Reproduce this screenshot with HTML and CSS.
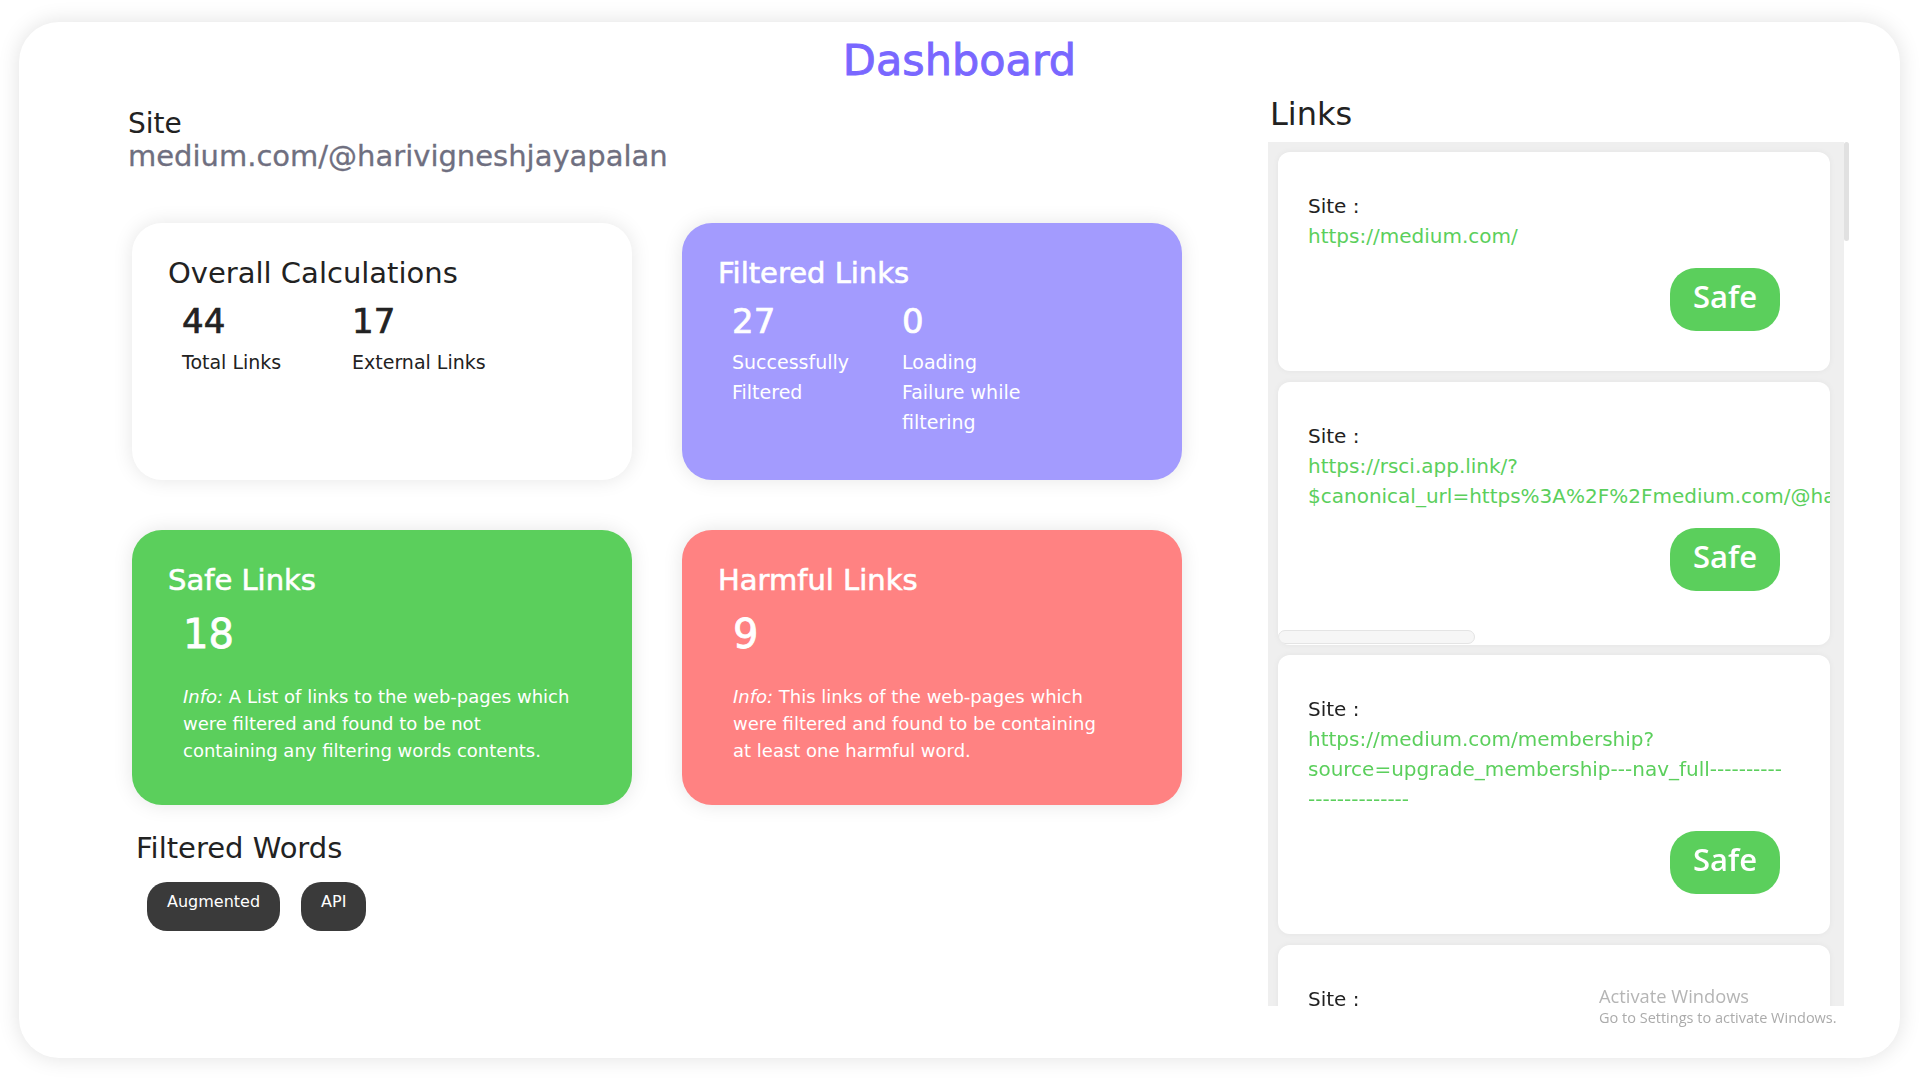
FILE: index.html
```html
<!DOCTYPE html>
<html lang="en">
<head>
<meta charset="utf-8">
<title>Dashboard</title>
<link rel="stylesheet" href="styles.css">
</head>
<body>
<div class="panel">
  <h1 class="title">Dashboard</h1>
  <div class="main">
    <section class="left">
      <div class="site">
        <div class="site-label">Site</div>
        <div class="site-url">medium.com/@harivigneshjayapalan</div>
      </div>

      <div class="cards">
        <div class="card card-white">
          <h2 class="card-title">Overall Calculations</h2>
          <div class="stats">
            <div class="stat">
              <div class="stat-num">44</div>
              <div class="stat-label">Total Links</div>
            </div>
            <div class="stat">
              <div class="stat-num">17</div>
              <div class="stat-label">External Links</div>
            </div>
          </div>
        </div>

        <div class="card card-purple">
          <h2 class="card-title">Filtered Links</h2>
          <div class="stats">
            <div class="stat">
              <div class="stat-num">27</div>
              <div class="stat-label">Successfully Filtered</div>
            </div>
            <div class="stat">
              <div class="stat-num">0</div>
              <div class="stat-label">Loading Failure while filtering</div>
            </div>
          </div>
        </div>

        <div class="card card-green">
          <h2 class="card-title">Safe Links</h2>
          <div class="big-num">18</div>
          <p class="info"><em>Info:</em> A List of links to the web-pages which<br>were filtered and found to be not<br>containing any filtering words contents.</p>
        </div>

        <div class="card card-red">
          <h2 class="card-title">Harmful Links</h2>
          <div class="big-num">9</div>
          <p class="info"><em>Info:</em> This links of the web-pages which<br>were filtered and found to be containing<br>at least one harmful word.</p>
        </div>
      </div>

      <h2 class="words-title">Filtered Words</h2>
      <div class="pills">
        <span class="pill">Augmented</span>
        <span class="pill">API</span>
      </div>
    </section>

    <section class="right">
      <h2 class="links-title">Links</h2>
      <div class="list-wrap">
        <div class="link-list">
          <div class="link-card">
            <div class="link-site">Site :</div>
            <div class="link-url"><span class="line">https://medium.com/</span></div>
            <span class="verdict safe">Safe</span>
          </div>
          <div class="link-card scroll">
            <div class="link-site">Site :</div>
            <div class="link-url"><span class="line">https://rsci.app.link/?</span><span class="line">$canonical_url=https%3A%2F%2Fmedium.com/@harivigneshjayapalan&amp;~feature=LoOpenInAppButton&amp;~channel=ShowUser&amp;~stage=mobileNav</span></div>
            <span class="verdict safe">Safe</span>
            <div class="hthumb"></div>
          </div>
          <div class="link-card">
            <div class="link-site">Site :</div>
            <div class="link-url"><span class="line">https://medium.com/membership?</span><span class="line">source=upgrade_membership---nav_full----------</span><span class="line">--------------</span></div>
            <span class="verdict safe">Safe</span>
          </div>
          <div class="link-card">
            <div class="link-site">Site :</div>
            <div class="link-url wrap">https://medium.com/?source=---two_column_layout_nav----------------------------------</div>
            <span class="verdict safe">Safe</span>
          </div>
          <div class="link-card">
            <div class="link-site">Site :</div>
            <div class="link-url wrap">https://medium.com/m/signin?operation=register&amp;redirect=https%3A%2F%2Fmedium.com%2F%40harivigneshjayapalan</div>
            <span class="verdict safe">Safe</span>
          </div>
          <div class="link-card">
            <div class="link-site">Site :</div>
            <div class="link-url wrap">https://medium.com/@harivigneshjayapalan/augmented-reality-in-the-browser-with-webxr-3c5d2a9e1f41</div>
            <span class="verdict harmful">Harmful</span>
          </div>
          <div class="link-card">
            <div class="link-site">Site :</div>
            <div class="link-url wrap">https://medium.com/m/signin?operation=login&amp;redirect=https%3A%2F%2Fmedium.com%2F%40harivigneshjayapalan</div>
            <span class="verdict safe">Safe</span>
          </div>
          <div class="link-card">
            <div class="link-site">Site :</div>
            <div class="link-url wrap">https://medium.com/@harivigneshjayapalan/building-a-rest-api-with-node-js-and-express-7b1e4d3c2a10</div>
            <span class="verdict harmful">Harmful</span>
          </div>
          <div class="link-card">
            <div class="link-site">Site :</div>
            <div class="link-url wrap">https://medium.com/search?source=---two_column_layout_nav----------------------------------</div>
            <span class="verdict safe">Safe</span>
          </div>
          <div class="link-card">
            <div class="link-site">Site :</div>
            <div class="link-url wrap">https://medium.com/@harivigneshjayapalan/augmented-reality-markers-and-image-tracking-9f2a61c0d8e3</div>
            <span class="verdict harmful">Harmful</span>
          </div>
          <div class="link-card">
            <div class="link-site">Site :</div>
            <div class="link-url wrap">https://medium.com/new-story?source=---two_column_layout_nav-----------------------</div>
            <span class="verdict safe">Safe</span>
          </div>
          <div class="link-card">
            <div class="link-site">Site :</div>
            <div class="link-url wrap">https://medium.com/@harivigneshjayapalan/followers?source=user_profile-------------------------------------</div>
            <span class="verdict safe">Safe</span>
          </div>
          <div class="link-card">
            <div class="link-site">Site :</div>
            <div class="link-url wrap">https://medium.com/@harivigneshjayapalan/consuming-a-public-api-in-react-hooks-2d8e5f7a4b96</div>
            <span class="verdict harmful">Harmful</span>
          </div>
          <div class="link-card">
            <div class="link-site">Site :</div>
            <div class="link-url wrap">https://medium.com/@harivigneshjayapalan/about?source=user_profile-------------------------------------</div>
            <span class="verdict safe">Safe</span>
          </div>
          <div class="link-card">
            <div class="link-site">Site :</div>
            <div class="link-url wrap">https://help.medium.com/hc/en-us?source=user_profile-------------------------------------</div>
            <span class="verdict safe">Safe</span>
          </div>
          <div class="link-card">
            <div class="link-site">Site :</div>
            <div class="link-url wrap">https://medium.com/@harivigneshjayapalan/augmented-reality-with-unity-and-vuforia-61c4a8b2e7d5</div>
            <span class="verdict harmful">Harmful</span>
          </div>
          <div class="link-card">
            <div class="link-site">Site :</div>
            <div class="link-url wrap">https://medium.statuspage.io/?source=user_profile-------------------------------------</div>
            <span class="verdict safe">Safe</span>
          </div>
          <div class="link-card">
            <div class="link-site">Site :</div>
            <div class="link-url wrap">https://about.medium.com/creators/?source=user_profile-------------------------------------</div>
            <span class="verdict safe">Safe</span>
          </div>
          <div class="link-card">
            <div class="link-site">Site :</div>
            <div class="link-url wrap">https://medium.com/@harivigneshjayapalan/securing-your-api-with-jwt-tokens-0a3f9e6c1b28</div>
            <span class="verdict harmful">Harmful</span>
          </div>
          <div class="link-card">
            <div class="link-site">Site :</div>
            <div class="link-url wrap">https://blog.medium.com/?source=user_profile-------------------------------------</div>
            <span class="verdict safe">Safe</span>
          </div>
          <div class="link-card">
            <div class="link-site">Site :</div>
            <div class="link-url wrap">https://medium.com/jobs-at-medium/work-at-medium-959d1a85284e?source=user_profile--------------</div>
            <span class="verdict safe">Safe</span>
          </div>
          <div class="link-card">
            <div class="link-site">Site :</div>
            <div class="link-url wrap">https://medium.com/@harivigneshjayapalan/augmented-and-virtual-reality-what-is-the-difference-4e7b9d2c6a01</div>
            <span class="verdict harmful">Harmful</span>
          </div>
          <div class="link-card">
            <div class="link-site">Site :</div>
            <div class="link-url wrap">https://policy.medium.com/medium-privacy-policy-f03bf92035c9?source=user_profile-------------</div>
            <span class="verdict safe">Safe</span>
          </div>
          <div class="link-card">
            <div class="link-site">Site :</div>
            <div class="link-url wrap">https://policy.medium.com/medium-terms-of-service-9db0094a1e0f?source=user_profile-------------</div>
            <span class="verdict safe">Safe</span>
          </div>
          <div class="link-card">
            <div class="link-site">Site :</div>
            <div class="link-url wrap">https://medium.com/@harivigneshjayapalan/graphql-vs-rest-api-design-choices-5c2d8a1f9e73</div>
            <span class="verdict harmful">Harmful</span>
          </div>
          <div class="link-card">
            <div class="link-site">Site :</div>
            <div class="link-url wrap">https://speechify.com/medium?source=user_profile-------------------------------------</div>
            <span class="verdict safe">Safe</span>
          </div>
          <div class="link-card">
            <div class="link-site">Site :</div>
            <div class="link-url wrap">https://medium.com/@harivigneshjayapalan/testing-api-endpoints-with-postman-8b6e1c4d7f20</div>
            <span class="verdict harmful">Harmful</span>
          </div>
        </div>
        <div class="vscroll"><div class="vthumb"></div></div>
      </div>
    </section>
  </div>
</div>

<div class="watermark">
  <div class="wm-1">Activate Windows</div>
  <div class="wm-2">Go to Settings to activate Windows.</div>
</div>
</body>
</html>
```
FILE: styles.css
```css
html, body {
  margin: 0;
  padding: 0;
  background: #ffffff;
}

body {
  font-family: "DejaVu Sans", "Liberation Sans", sans-serif;
  color: #222222;
  overflow: hidden;
}

.panel {
  margin: 22px 20px 22px 19px;
  height: 1036px;
  box-sizing: border-box;
  padding-top: 12px;
  background: #ffffff;
  border-radius: 40px;
  box-shadow: 0 0 22px rgba(0, 0, 0, 0.12);
  overflow: hidden;
}

.title {
  margin: 0;
  text-align: center;
  font-size: 43px;
  line-height: 52px;
  font-weight: normal;
  color: #7967ff;
  -webkit-text-stroke: 0.9px #7967ff;
}

.main {
  display: grid;
  grid-template-columns: 1140px 582px;
  padding-left: 109px;
}

/* ---------- left column ---------- */

.site {
  margin-top: 21px;
}

.site-label {
  font-size: 28px;
  line-height: 33px;
  color: #222222;
}

.site-url {
  font-size: 29px;
  line-height: 33px;
  color: #6f6f80;
  -webkit-text-stroke: 0.3px #6f6f80;
}

.cards {
  display: grid;
  grid-template-columns: 500px 500px;
  grid-template-rows: 257px 275px;
  gap: 50px;
  margin: 50px 0 0 4px;
}

.card {
  box-sizing: border-box;
  padding: 32px 36px;
  border-radius: 30px;
  box-shadow: 0 0 20px rgba(0, 0, 0, 0.1);
}

.card-white {
  background: #ffffff;
  color: #222222;
}

.card-purple {
  background: #a39bfe;
  color: #ffffff;
}

.card-green {
  background: #5bcf5c;
  color: #ffffff;
}

.card-red {
  background: #ff8282;
  color: #ffffff;
}

.card-title {
  margin: 0;
  font-size: 29px;
  line-height: 36px;
  font-weight: normal;
}

.card-purple .card-title,
.card-green .card-title,
.card-red .card-title {
  -webkit-text-stroke: 0.6px #ffffff;
}

.stats {
  display: flex;
  gap: 30px;
  margin: 10px 0 0 14px;
}

.stat {
  width: 140px;
}

.stat-num {
  font-size: 34px;
  line-height: 40px;
  -webkit-text-stroke: 0.7px currentColor;
}

.stat-label {
  margin-top: 6px;
  font-size: 19px;
  line-height: 30px;
}

.big-num {
  margin: 13px 0 0 15px;
  font-size: 40px;
  line-height: 46px;
  -webkit-text-stroke: 0.8px #ffffff;
}

.info {
  margin: 26px 0 0 15px;
  font-size: 18px;
  line-height: 27px;
  white-space: nowrap;
}

.words-title {
  margin: 25px 0 0 8px;
  font-size: 29px;
  line-height: 36px;
  font-weight: normal;
  color: #222222;
}

.pills {
  display: flex;
  gap: 21px;
  margin: 16px 0 0 19px;
}

.pill {
  padding: 8px 20px 17px;
  border-radius: 20px;
  background: #3a3a3a;
  color: #ffffff;
  font-size: 16px;
  line-height: 24px;
}

/* ---------- right column ---------- */

.links-title {
  margin: 8px 0 0 2px;
  font-size: 32px;
  line-height: 40px;
  font-weight: normal;
  color: #222222;
}

.list-wrap {
  display: flex;
  margin-top: 8px;
  height: 864px;
}

.link-list {
  width: 576px;
  height: 100%;
  box-sizing: border-box;
  padding: 10px 14px 10px 10px;
  background: #efefef;
  overflow-y: auto;
  overflow-x: hidden;
  scrollbar-width: none;
  display: flex;
  flex-direction: column;
  gap: 10.5px;
}

.link-list::-webkit-scrollbar {
  display: none;
}

.vscroll {
  width: 6px;
  height: 100%;
}

.vthumb {
  width: 5px;
  height: 99px;
  border-radius: 3px;
  background: #e1e1e1;
}

.link-card {
  flex-shrink: 0;
  display: flex;
  flex-direction: column;
  padding: 39px 50px 40px 30px;
  background: #ffffff;
  border-radius: 12px;
  box-shadow: 0 0 6px rgba(0, 0, 0, 0.05);
}

.link-card.scroll {
  padding-bottom: 0;
  overflow-x: auto;
  scrollbar-width: none;
}

.link-card.scroll::-webkit-scrollbar {
  display: none;
}

.hthumb {
  align-self: flex-start;
  flex-shrink: 0;
  width: 197px;
  height: 14px;
  margin: 39px 0 1px -30px;
  box-sizing: border-box;
  background: #f6f6f6;
  border: 1px solid #e4e4e4;
  border-radius: 7px;
}

.link-site {
  font-size: 20px;
  line-height: 30px;
  color: #222222;
}

.link-url {
  font-size: 20px;
  line-height: 30px;
  color: #5bcf5c;
}

.link-url.wrap {
  overflow-wrap: anywhere;
}

.line {
  display: block;
  white-space: nowrap;
}

.verdict {
  align-self: flex-end;
  margin-top: 17px;
  min-width: 110px;
  box-sizing: border-box;
  padding: 0 22px 6px;
  border-radius: 26px;
  font-family: "Open Sans", "DejaVu Sans", sans-serif;
  font-weight: 600;
  font-size: 31px;
  line-height: 57px;
  text-align: center;
  color: #ffffff;
}

.verdict.safe {
  background: #5bcf5c;
}

.verdict.harmful {
  background: #ff8282;
}

/* ---------- OS watermark overlay ---------- */

.watermark {
  position: fixed;
  left: 1599px;
  top: 984px;
  font-family: "Open Sans", "Noto Sans", sans-serif;
  pointer-events: none;
}

.wm-1 {
  font-size: 18.3px;
  line-height: 24px;
  color: #b5b5b5;
}

.wm-2 {
  font-size: 14.5px;
  line-height: 19px;
  color: #ababab;
}
```
